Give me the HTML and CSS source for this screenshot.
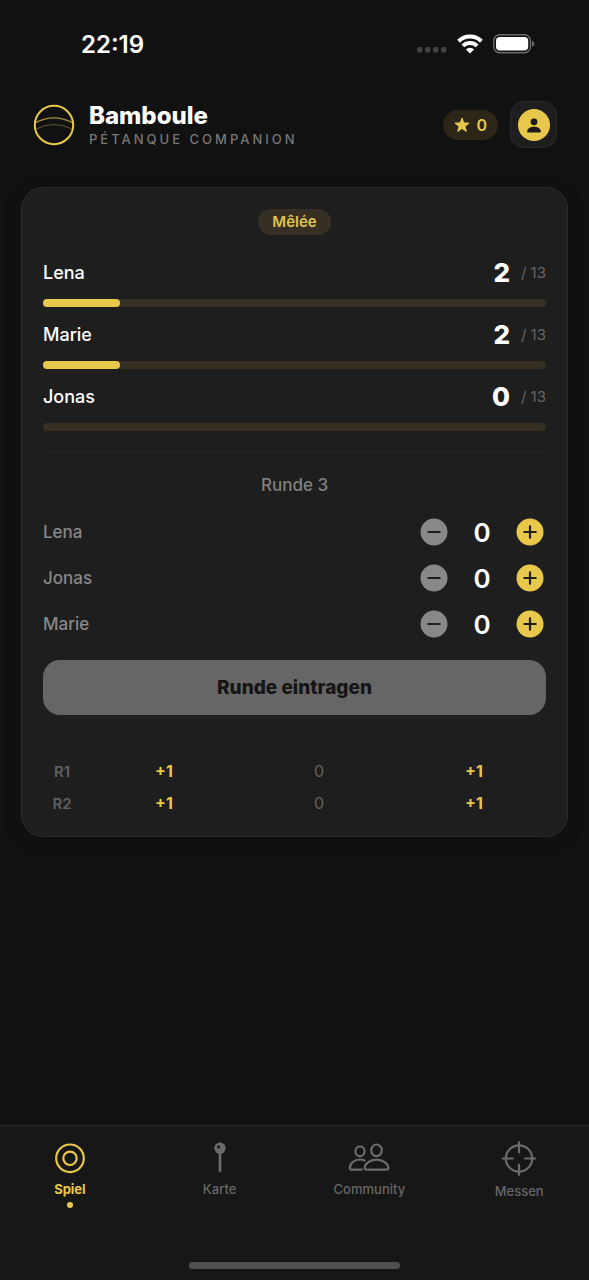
FILE: index.html
```html
<!DOCTYPE html>
<html lang="de">
<head>
<meta charset="utf-8">
<meta name="viewport" content="width=device-width, initial-scale=1">
<title>Bamboule</title>
<link rel="stylesheet" href="styles.css">
</head>
<body>
<div class="app">
  <div class="status">
    <time class="status-time">22:19</time>
    <div class="status-icons">
      <svg width="30" height="6" viewBox="0 0 30 6" fill="#454545" aria-hidden="true"><rect width="5.4" height="5.4" rx="1.6"/><rect x="8" width="5.4" height="5.4" rx="1.6"/><rect x="16" width="5.4" height="5.4" rx="1.6"/><rect x="24" width="5.4" height="5.4" rx="1.6"/></svg>
      <svg width="26" height="20" viewBox="0 0 26 20" aria-hidden="true"><g fill="none" stroke="#fff" stroke-width="4"><path d="M1.600 7.200a16.300 16.300 0 0 1 22.800 0"/><path d="M5.900 11.900a10.100 10.100 0 0 1 14.200 0"/></g><path d="M13 19.400 8.900 15.500a5.800 5.800 0 0 1 8.200 0z" fill="#fff"/></svg>
      <svg width="42" height="20" viewBox="0 0 42 20" aria-hidden="true"><rect x=".8" y=".8" width="36.6" height="18" rx="5.8" fill="none" stroke="#6a6a6a" stroke-width="1.4"/><rect x="3" y="3" width="32.2" height="13.6" rx="4" fill="#fff"/><path d="M39.2 6.8c2.6 1 2.6 5 0 6z" fill="#777"/></svg>
    </div>
  </div>

  <header class="header">
    <svg class="logo" width="42" height="42" viewBox="0 0 42 42" fill="none" stroke="#e8c84a" aria-hidden="true"><circle cx="21" cy="21" r="19.200" stroke-width="2"/><path d="M2.400 18.700Q21 8.900 39.600 18.700" stroke-width="1.200" opacity=".7"/><path d="M3.200 24.900Q21 16.100 38.800 24.900" stroke-width=".9" opacity=".42"/></svg>
    <div class="brand">
      <h1 class="brand-name">Bamboule</h1>
      <p class="brand-sub">PÉTANQUE COMPANION</p>
    </div>
    <div class="points">
      <svg width="18" height="18" viewBox="0 0 18 18" fill="#e8c84a" stroke="#e8c84a" stroke-width="1" stroke-linejoin="round" aria-hidden="true"><path d="m9 2 1.8 4.9 5.3.2-4.2 3.3 1.5 5L9 12.5l-4.4 2.9 1.5-5-4.2-3.3 5.3-.2z"/></svg>
      <span>0</span>
    </div>
    <button class="profile" type="button" aria-label="Profil">
      <svg width="32" height="32" viewBox="0 0 32 32" aria-hidden="true"><circle cx="16" cy="16" r="16" fill="#e8c84a"/><g fill="#1a1a1a"><circle cx="16" cy="12.800" r="3.400"/><path d="M9.200 22.400c0-3 3-4.700 6.800-4.700s6.800 1.700 6.800 4.700c0 .7-.4 1.100-1.100 1.100H10.300c-.7 0-1.100-.4-1.100-1.100z"/></g></svg>
    </button>
  </header>

  <main class="main">
    <section class="card">
      <span class="mode">Mêlée</span>
      <div class="scores">
        <div class="score">
          <div class="score-row"><span class="score-name">Lena</span><span class="score-value">2</span><span class="score-max">/ 13</span></div>
          <div class="track"><div class="fill" style="width:15.4%"></div></div>
        </div>
        <div class="score">
          <div class="score-row"><span class="score-name">Marie</span><span class="score-value">2</span><span class="score-max">/ 13</span></div>
          <div class="track"><div class="fill" style="width:15.4%"></div></div>
        </div>
        <div class="score">
          <div class="score-row"><span class="score-name">Jonas</span><span class="score-value">0</span><span class="score-max">/ 13</span></div>
          <div class="track"></div>
        </div>
      </div>

      <div class="round">
        <h2 class="round-title">Runde 3</h2>
        <div class="counters">
          <div class="counter">
            <span class="counter-name">Lena</span>
            <button class="step" type="button" aria-label="Lena minus"><svg width="28" height="28" viewBox="0 0 28 28" aria-hidden="true"><circle cx="14" cy="14" r="13.500" fill="#888"/><path d="M8.300 14h11.400" stroke="#1e1e1e" stroke-width="2.200" stroke-linecap="round"/></svg></button>
            <output class="counter-value">0</output>
            <button class="step" type="button" aria-label="Lena plus"><svg width="28" height="28" viewBox="0 0 28 28" aria-hidden="true"><circle cx="14" cy="14" r="13.500" fill="#e8c84a"/><path d="M8.300 14h11.400M14 8.300v11.400" stroke="#1e1e1e" stroke-width="2.200" stroke-linecap="round"/></svg></button>
          </div>
          <div class="counter">
            <span class="counter-name">Jonas</span>
            <button class="step" type="button" aria-label="Jonas minus"><svg width="28" height="28" viewBox="0 0 28 28" aria-hidden="true"><circle cx="14" cy="14" r="13.500" fill="#888"/><path d="M8.300 14h11.400" stroke="#1e1e1e" stroke-width="2.200" stroke-linecap="round"/></svg></button>
            <output class="counter-value">0</output>
            <button class="step" type="button" aria-label="Jonas plus"><svg width="28" height="28" viewBox="0 0 28 28" aria-hidden="true"><circle cx="14" cy="14" r="13.500" fill="#e8c84a"/><path d="M8.300 14h11.400M14 8.300v11.400" stroke="#1e1e1e" stroke-width="2.200" stroke-linecap="round"/></svg></button>
          </div>
          <div class="counter">
            <span class="counter-name">Marie</span>
            <button class="step" type="button" aria-label="Marie minus"><svg width="28" height="28" viewBox="0 0 28 28" aria-hidden="true"><circle cx="14" cy="14" r="13.500" fill="#888"/><path d="M8.300 14h11.400" stroke="#1e1e1e" stroke-width="2.200" stroke-linecap="round"/></svg></button>
            <output class="counter-value">0</output>
            <button class="step" type="button" aria-label="Marie plus"><svg width="28" height="28" viewBox="0 0 28 28" aria-hidden="true"><circle cx="14" cy="14" r="13.500" fill="#e8c84a"/><path d="M8.300 14h11.400M14 8.300v11.400" stroke="#1e1e1e" stroke-width="2.200" stroke-linecap="round"/></svg></button>
          </div>
        </div>
        <button class="submit" type="button">Runde eintragen</button>
      </div>

      <div class="history">
        <table class="rounds">
          <tbody>
            <tr><th scope="row">R1</th><td class="gain">+1</td><td>0</td><td class="gain">+1</td></tr>
            <tr><th scope="row">R2</th><td class="gain">+1</td><td>0</td><td class="gain">+1</td></tr>
          </tbody>
        </table>
      </div>
    </section>
  </main>

  <nav class="nav">
    <div class="tabs">
      <a class="tab tab-active" href="#spiel" aria-current="page">
        <svg width="34" height="34" viewBox="0 0 34 34" fill="none" stroke="currentColor" stroke-width="2.200" aria-hidden="true"><circle cx="17" cy="17.300" r="13.800"/><circle cx="17" cy="17.300" r="6.700"/></svg>
        <span>Spiel</span>
      </a>
      <a class="tab" href="#karte">
        <svg width="34" height="34" viewBox="0 0 34 34" aria-hidden="true"><circle cx="17" cy="7.300" r="5.700" fill="#6b6b6b"/><path d="M15.600 12h2.800v17.500L17 32l-1.400-2.500z" fill="#6b6b6b"/><circle cx="15.600" cy="6" r="1.700" fill="#1b1b1b"/></svg>
        <span>Karte</span>
      </a>
      <a class="tab" href="#community">
        <svg width="42" height="34" viewBox="0 0 42 34" fill="none" stroke="#6b6b6b" stroke-width="2.200" stroke-linejoin="round" stroke-linecap="round" aria-hidden="true"><ellipse cx="12" cy="10.300" rx="4.600" ry="5"/><ellipse cx="28.500" cy="9.300" rx="5.300" ry="5.800"/><path d="M16.500 19.400c-1.300-.6-2.800-.9-4.500-.9-6 0-10.100 4-10.100 8.400 0 1.300.6 1.700 1.800 1.700H14"/><path d="M18.600 28.600c-1.200 0-1.900-.4-1.900-1.500 0-3.900 4.800-8.400 11.800-8.400s11.800 4.500 11.800 8.400c0 1.100-.7 1.500-1.900 1.500z"/></svg>
        <span>Community</span>
      </a>
      <a class="tab" href="#messen">
        <svg width="36" height="36" viewBox="0 0 36 36" fill="none" stroke="#6b6b6b" stroke-width="2.200" stroke-linecap="round" aria-hidden="true"><circle cx="18" cy="17.500" r="13.200"/><path d="M18 1.200v10.200M18 23.600v10.200M1.700 17.500h10.200M24.100 17.500h10.200"/></svg>
        <span>Messen</span>
      </a>
    </div>
    <div class="home-bar"></div>
  </nav>
</div>
</body>
</html>
```
FILE: styles.css
```css
* { box-sizing: border-box; }

body {
  margin: 0;
  background: #111;
  color: #fff;
  font-family: Inter, "Liberation Sans", sans-serif;
}

h1, h2, p { margin: 0; }
svg { display: block; }

button {
  margin: 0;
  padding: 0;
  border: 0;
  background: none;
  font: inherit;
  cursor: pointer;
}

.app {
  min-height: 100vh;
  display: flex;
  flex-direction: column;
}

.status {
  display: flex;
  justify-content: space-between;
  align-items: center;
  height: 88px;
  padding: 0 54px 0 81px;
}

.status-time {
  font-size: 24px;
  font-weight: 600;
}

.status-icons {
  display: flex;
  align-items: center;
  gap: 10px;
}

.status-icons svg:first-child { margin-top: 12px; }

.header {
  display: flex;
  align-items: center;
  padding: 13px 32px 0 33px;
}

.logo { flex: none; }

.brand {
  flex: 1;
  padding: 1px 0 0 14px;
}

.brand-name {
  font-size: 24px;
  font-weight: 800;
  line-height: 28px;
}

.brand-sub {
  color: #777;
  font-size: 13px;
  font-weight: 500;
  line-height: 18px;
  letter-spacing: 3px;
}

.points {
  display: flex;
  align-items: center;
  gap: 5px;
  height: 30px;
  margin-right: 12px;
  padding: 0 11px 0 10px;
  border-radius: 15px;
  background: #2b2618;
  color: #e8c84a;
  font-size: 16px;
  font-weight: 600;
}

.profile {
  display: grid;
  place-items: center;
  width: 47px;
  height: 47px;
  border: 1px solid #2a2a2a;
  border-radius: 14px;
  background: #1e1e1e;
}

.main {
  flex: 1;
  padding: 39px 21px 24px;
}

.card {
  display: flex;
  flex-direction: column;
  padding: 21px 21px 17px;
  border: 1px solid #2b2b2b;
  border-radius: 22px;
  background: #1e1e1e;
  box-shadow: 0 4px 20px rgba(0, 0, 0, .1);
}

.mode {
  align-self: center;
  padding: 0 14px;
  border-radius: 13px;
  background: #363024;
  color: #e0c050;
  font-size: 15px;
  font-weight: 600;
  line-height: 26px;
}

.scores {
  display: grid;
  gap: 10px;
  margin-top: 20px;
}

.score-row {
  display: flex;
  align-items: center;
  height: 34px;
}

.score-name {
  flex: 1;
  font-size: 18px;
  font-weight: 500;
}

.score-value {
  font-size: 26px;
  font-weight: 800;
}

.score-max {
  margin-left: 11px;
  color: #666;
  font-size: 15px;
}

.track {
  height: 8px;
  margin-top: 10px;
  border-radius: 4px;
  background: #363024;
}

.fill {
  height: 8px;
  border-radius: 4px;
  background: #e8c84a;
}

.round {
  margin-top: 21px;
  padding-top: 21px;
  border-top: 1px solid #252525;
}

.round-title {
  color: #808080;
  font-size: 17px;
  font-weight: 500;
  line-height: 22px;
  text-align: center;
}

.counters {
  display: grid;
  gap: 14px;
  margin-top: 20px;
}

.counter {
  display: flex;
  align-items: center;
  gap: 16px;
  height: 32px;
}

.counter-name {
  flex: 1;
  color: #888;
  font-size: 17px;
  font-weight: 500;
}

.step {
  display: grid;
  place-items: center;
  width: 32px;
  height: 32px;
}

.counter-value {
  width: 32px;
  font-size: 26px;
  font-weight: 600;
  text-align: center;
}

.submit {
  display: block;
  width: 100%;
  height: 55px;
  margin-top: 20px;
  border-radius: 17px;
  background: #666;
  color: #151515;
  font-size: 19px;
  font-weight: 800;
}

.history {
  margin-top: 22px;
  padding-top: 17px;
  border-top: 1px solid #232323;
}

.rounds {
  width: 100%;
  border-collapse: collapse;
  table-layout: fixed;
  text-align: center;
}

.rounds th {
  width: 38px;
  height: 32px;
  padding: 0;
  color: #606060;
  font-size: 15px;
  font-weight: 600;
}

.rounds td {
  padding: 0 0 0 11px;
  color: #606060;
  font-size: 16px;
}

.rounds .gain {
  color: #e8c84a;
  font-weight: 700;
}

.nav {
  display: flex;
  flex-direction: column;
  justify-content: space-between;
  align-items: center;
  min-height: 155px;
  padding: 15px 10px 11px;
  border-top: 1px solid #272727;
  background: #171717;
}

.tabs {
  display: grid;
  grid-template-columns: repeat(4, 1fr);
  gap: 30px;
  width: 100%;
}

.tab {
  display: flex;
  flex-direction: column;
  align-items: center;
  gap: 5px;
  color: #666;
  font-size: 13px;
  font-weight: 500;
  line-height: 18px;
  text-decoration: none;
}

.tab-active {
  color: #e8c84a;
  font-weight: 700;
}

.tab-active::after {
  content: "";
  width: 6px;
  height: 6px;
  margin-top: -1px;
  border-radius: 50%;
  background: #e8c84a;
}

.home-bar {
  width: 37%;
  height: 7px;
  border-radius: 4px;
  background: #505050;
}
```
